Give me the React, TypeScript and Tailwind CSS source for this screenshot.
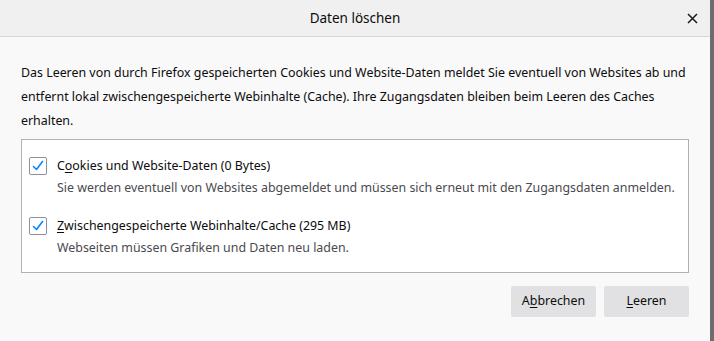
import React, { useState } from 'react';

const font = { fontFamily: '"Noto Sans", "Open Sans", sans-serif' };

function Check({ checked, onChange }: { checked: boolean; onChange: () => void }) {
  return (
    <button
      onClick={onChange}
      className="w-[18px] h-[18px] shrink-0 border border-[#8f8f9d] bg-white rounded-[2px] flex items-center justify-center"
    >
      {checked && (
        <svg width="14" height="14" viewBox="0 0 14 14" fill="none">
          <path d="M2.5 7.5 L5.5 10.5 L11.5 2.5" stroke="#0a84ff" strokeWidth="1.6" strokeLinecap="round" strokeLinejoin="round" />
        </svg>
      )}
    </button>
  );
}

function Option({
  accessKey,
  rest,
  prefix,
  desc,
}: {
  accessKey: string;
  rest: string;
  prefix?: string;
  desc: string;
}) {
  const [checked, setChecked] = useState(true);
  return (
    <div className="flex gap-[10px]">
      <div className="pt-[2px]">
        <Check checked={checked} onChange={() => setChecked(!checked)} />
      </div>
      <div className="flex flex-col whitespace-nowrap">
        <span className="text-[12.4px] leading-[22px] text-[#0c0c0d]">
          {prefix}
          <span className="underline underline-offset-2">{accessKey}</span>
          {rest}
        </span>
        <span className="text-[12.4px] leading-[22px] text-[#4a4a4f]">{desc}</span>
      </div>
    </div>
  );
}

export default function App() {
  return (
    <div className="w-[714px] h-[341px] flex bg-[#f9f9fa]" style={font}>
      <div className="flex-1 min-w-0 flex flex-col">
        <div className="h-[37px] bg-[#f0f0f0] border-b border-[#d7d7db] flex items-center relative">
          <span className="flex-1 text-center text-[13.5px] text-[#0c0c0d]">Daten löschen</span>
          <button className="absolute right-[10px] top-[10px] w-[16px] h-[16px] flex items-center justify-center">
            <svg width="11" height="11" viewBox="0 0 11 11">
              <path d="M1 1 L10 10 M10 1 L1 10" stroke="#1a1a1a" strokeWidth="1.5" />
            </svg>
          </button>
        </div>

        <div className="flex flex-col px-[21px] pt-[24px]">
          <p className="text-[12.4px] leading-[24px] text-[#0c0c0d] whitespace-nowrap">
            Das Leeren von durch Firefox gespeicherten Cookies und Website-Daten meldet Sie eventuell von Websites ab und
            <br />
            entfernt lokal zwischengespeicherte Webinhalte (Cache). Ihre Zugangsdaten bleiben beim Leeren des Caches
            <br />
            erhalten.
          </p>

          <div className="mt-[6px] h-[134px] bg-white border border-[#b1b1b3] px-[7px] pt-[15px] flex flex-col gap-[16px]">
            <Option
              prefix="C"
              accessKey="o"
              rest="okies und Website-Daten (0 Bytes)"
              desc="Sie werden eventuell von Websites abgemeldet und müssen sich erneut mit den Zugangsdaten anmelden."
            />
            <Option
              accessKey="Z"
              rest="wischengespeicherte Webinhalte/Cache (295 MB)"
              desc="Webseiten müssen Grafiken und Daten neu laden."
            />
          </div>

          <div className="flex justify-end gap-[8px] mt-[13px]">
            <button className="w-[85px] h-[31px] bg-[#e1e1e3] rounded-[2px] text-[12.4px] text-[#0c0c0d]">
              A<span className="underline underline-offset-2">b</span>brechen
            </button>
            <button className="w-[85px] h-[31px] bg-[#e1e1e3] rounded-[2px] text-[12.4px] text-[#0c0c0d]">
              <span className="underline underline-offset-2">L</span>eeren
            </button>
          </div>
        </div>
      </div>
      <div className="w-[4px] bg-[#6d6d6d]" />
    </div>
  );
}
